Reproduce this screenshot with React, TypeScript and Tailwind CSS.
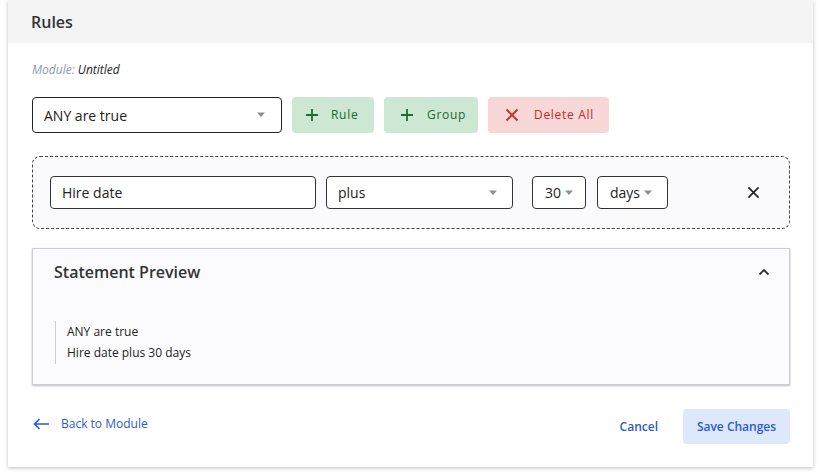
import React from "react";

function Caret() {
  return (
    <svg width="10" height="6" viewBox="0 0 10 6" className="shrink-0">
      <path d="M1 0.5h8L5 5z" fill="#8a8f98" />
    </svg>
  );
}

function PlusIcon() {
  return (
    <svg width="14" height="14" viewBox="0 0 14 14" className="shrink-0">
      <path d="M7 1v12M1 7h12" stroke="#1e6b36" strokeWidth="1.8" fill="none" />
    </svg>
  );
}

function CrossIcon({ color, size }: { color: string; size: number }) {
  return (
    <svg width={size} height={size} viewBox="0 0 14 14" className="shrink-0">
      <path d="M1.5 1.5l11 11M12.5 1.5l-11 11" stroke={color} strokeWidth="1.8" fill="none" />
    </svg>
  );
}

export default function App() {
  return (
    <div className="min-h-screen bg-white px-2 font-['Open_Sans',sans-serif] text-[#222]">
      <div className="h-[467px] w-[805px] flex flex-col bg-white shadow-[0_1px_4px_rgba(0,0,0,0.25)]">
        <div className="h-[43px] flex items-center bg-[#f4f4f5] px-[23px]">
          <h1 className="text-[16px] font-semibold text-[#333]">Rules</h1>
        </div>

        <div className="flex flex-col pl-6 pr-[23px] pt-[19px]">
          <p className="text-[12px] italic leading-4">
            <span className="text-[#8d97aa]">Module:</span> <span className="text-[#222]">Untitled</span>
          </p>

          <div className="mt-[19px] flex items-center gap-[10px]">
            <div className="h-[36px] w-[250px] flex items-center justify-between rounded-[4px] border border-[#222] pl-[11px] pr-[15px] text-[14px]">
              <span>ANY are true</span>
              <Caret />
            </div>
            <button className="h-[36px] w-[82px] flex items-center gap-[12px] rounded-[4px] bg-[#cde8d2] pl-[13px] text-[12px] font-medium tracking-[0.7px] text-[#1b6633]">
              <PlusIcon />
              Rule
            </button>
            <button className="h-[36px] w-[94px] flex items-center gap-[13px] rounded-[4px] bg-[#cde8d2] pl-[16px] text-[12px] font-medium tracking-[0.7px] text-[#1b6633]">
              <PlusIcon />
              Group
            </button>
            <button className="h-[36px] w-[121px] flex items-center gap-[15px] rounded-[4px] bg-[#f8d7d7] pl-[17px] text-[12px] font-medium tracking-[0.7px] text-[#c42828]">
              <CrossIcon color="#c72b2b" size={14} />
              Delete All
            </button>
          </div>

          <div className="mt-[23px] h-[73px] flex items-center rounded-[8px] border border-dashed border-[#444] bg-[#fafafd] pl-[17px] pr-[29px]">
            <div className="h-[33px] w-[266px] flex items-center rounded-[4px] border border-[#333] bg-white px-[11px] text-[14px]">
              Hire date
            </div>
            <div className="ml-[10px] h-[33px] w-[187px] flex items-center justify-between rounded-[4px] border border-[#333] bg-white pl-[11px] pr-[14px] text-[14px]">
              <span>plus</span>
              <Caret />
            </div>
            <div className="ml-[19px] h-[33px] w-[54px] flex items-center gap-[3px] rounded-[4px] border border-[#333] bg-white pl-[12px] text-[14px]">
              <span>30</span>
              <Caret />
            </div>
            <div className="ml-[11px] h-[33px] w-[71px] flex items-center gap-[3px] rounded-[4px] border border-[#333] bg-white pl-[12px] text-[14px]">
              <span>days</span>
              <Caret />
            </div>
            <div className="ml-auto">
              <CrossIcon color="#222" size={13} />
            </div>
          </div>

          <div className="mt-[19px] h-[137px] flex flex-col border border-[#c8cdd6] bg-[#fcfcfe] pl-[21px] pr-[19px] pt-[11px] shadow-[0_1px_2px_rgba(0,0,0,0.25)]">
            <div className="flex items-center justify-between">
              <h2 className="text-[16px] font-semibold leading-6 text-[#333]">Statement Preview</h2>
              <svg width="12" height="8" viewBox="0 0 12 8">
                <path d="M1.5 6.5L6 2l4.5 4.5" stroke="#333" strokeWidth="1.8" fill="none" />
              </svg>
            </div>
            <div className="mt-[37px] ml-px flex flex-col gap-[5px] border-l border-[#c8cdd6] pl-[11px] py-[3px] text-[12px] leading-4">
              <span>ANY are true</span>
              <span>Hire date plus 30 days</span>
            </div>
          </div>

          <div className="mt-[24px] flex items-center">
            <a className="-mt-[6px] ml-px flex items-center gap-[11px] text-[12px] text-[#2a5bd2]">
              <svg width="17" height="12" viewBox="0 0 17 12">
                <path d="M16 6H1.5M6.5 1L1.5 6l5 5" stroke="#2a5bd2" strokeWidth="1.6" fill="none" />
              </svg>
              Back to Module
            </a>
            <button className="ml-auto text-[12px] font-semibold text-[#2a5bd2]">Cancel</button>
            <button className="ml-[25px] h-[35px] w-[107px] rounded-[4px] bg-[#dde8fa] text-[12px] font-semibold text-[#2a5bd2]">
              Save Changes
            </button>
          </div>
        </div>
      </div>
    </div>
  );
}
